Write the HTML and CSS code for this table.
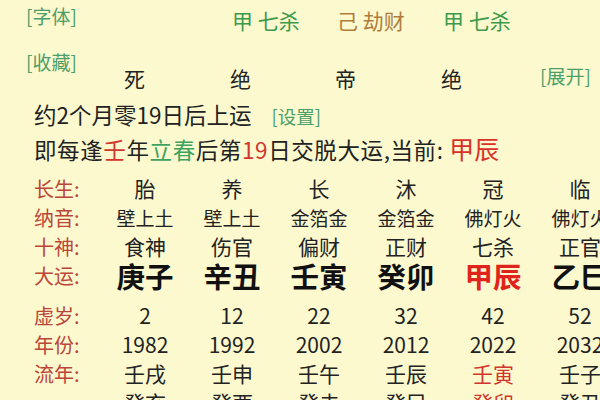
FILE: index.html
```html
<!DOCTYPE html>
<html lang="zh">
<head>
<meta charset="utf-8">
<title>大运</title>
<link rel="stylesheet" href="styles.css">
</head>
<body>
<div class="page">
  <div class="top">
    <span class="link t-font">[字体]</span>
    <span class="blank"></span>
    <span class="god green">甲 七杀</span>
    <span class="god brown">己 劫财</span>
    <span class="god green">甲 七杀</span>
    <span class="blank"></span>

    <span class="link t-fav">[收藏]</span>
    <span class="stage">死</span>
    <span class="stage">绝</span>
    <span class="stage">帝</span>
    <span class="stage">绝</span>
    <span class="link t-expand">[展开]</span>
  </div>

  <div class="info">
    <div class="line">约2个月零19日后上运<span class="link setting">[设置]</span></div>
    <div class="line wide">即每逢<span class="red">壬</span>年<span class="green2">立春</span>后第<span class="red">19</span>日交脱大运,当前: <span class="cur">甲辰</span></div>
  </div>

  <div class="table">
    <div class="row">
      <span class="label">长生:</span>
      <span>胎</span><span>养</span><span>长</span><span>沐</span><span>冠</span><span>临</span>
    </div>
    <div class="row nayin">
      <span class="label">纳音:</span>
      <span>壁上土</span><span>壁上土</span><span>金箔金</span><span>金箔金</span><span>佛灯火</span><span>佛灯火</span>
    </div>
    <div class="row">
      <span class="label">十神:</span>
      <span>食神</span><span>伤官</span><span>偏财</span><span>正财</span><span>七杀</span><span>正官</span>
    </div>
    <div class="row dayun">
      <span class="label">大运:</span>
      <span>庚子</span><span>辛丑</span><span>壬寅</span><span>癸卯</span><span class="hl">甲辰</span><span>乙巳</span>
    </div>
    <div class="row">
      <span class="label">虚岁:</span>
      <span>2</span><span>12</span><span>22</span><span>32</span><span>42</span><span>52</span>
    </div>
    <div class="row">
      <span class="label">年份:</span>
      <span>1982</span><span>1992</span><span>2002</span><span>2012</span><span>2022</span><span>2032</span>
    </div>
    <div class="row">
      <span class="label">流年:</span>
      <span>壬戌</span><span>壬申</span><span>壬午</span><span>壬辰</span><span class="red">壬寅</span><span>壬子</span>
    </div>
    <div class="row">
      <span class="label"></span>
      <span>癸亥</span><span>癸酉</span><span>癸未</span><span>癸巳</span><span class="red">癸卯</span><span>癸丑</span>
    </div>
  </div>
</div>
</body>
</html>
```

FILE: styles.css
```css
html, body {
  margin: 0;
  padding: 0;
  background: #fcf9cf;
  overflow: hidden;
}

body {
  width: 600px;
  height: 400px;
  font-family: "Noto Sans CJK SC", "Noto Sans", sans-serif;
  color: #222;
}

.page {
  width: 600px;
  height: 400px;
  overflow: hidden;
}

.top {
  display: grid;
  grid-template-columns: 100px 106px 105px 106px 97px auto;
  grid-template-rows: 38px 59px;
  align-items: start;
  padding-left: 26px;
}

.link {
  color: #4c9f68;
  font-size: 19px;
  line-height: 24px;
  white-space: nowrap;
}

.t-font { margin-top: 4px; }
.t-fav { margin-top: 12px; }
.t-expand { margin-top: 26px; }

.god {
  font-size: 21px;
  line-height: 24px;
  margin-top: 8px;
  white-space: nowrap;
}

.green { color: #3c9a4b; }
.brown { color: #b07d3c; }

.stage {
  font-size: 21px;
  line-height: 24px;
  margin-top: 28px;
  margin-left: -2px;
  color: #222;
}

.info {
  padding-left: 34px;
}

.line {
  font-size: 22.5px;
  line-height: 34px;
  white-space: nowrap;
  color: #222;
}

.line.wide {
  letter-spacing: 0.6px;
}

.setting {
  margin-left: 20px;
  font-size: 18.5px;
}

.red { color: #d2352b; }
.green2 { color: #3ea35e; }
.cur {
  color: #d8312a;
  font-size: 25px;
  letter-spacing: 0;
}

.table {
  margin-top: 8px;
  padding-left: 34px;
}

.row {
  display: grid;
  grid-template-columns: 67.5px repeat(6, 87px);
  height: 29px;
  line-height: 29px;
  font-size: 21px;
  white-space: nowrap;
}

.row span {
  text-align: center;
}

.row .label {
  text-align: left;
  color: #bb4538;
  font-size: 20px;
}

.row.nayin span {
  font-size: 19px;
}

.row.nayin .label {
  font-size: 20px;
}

.row.dayun {
  margin-bottom: 11px;
}

.row.dayun span {
  font-size: 28.5px;
  font-weight: bold;
  color: #111;
}

.row.dayun .label {
  font-size: 20px;
  font-weight: normal;
  color: #bb4538;
}

.row.dayun .hl {
  color: #e0231b;
}

.row .red {
  color: #d2352b;
}
```
